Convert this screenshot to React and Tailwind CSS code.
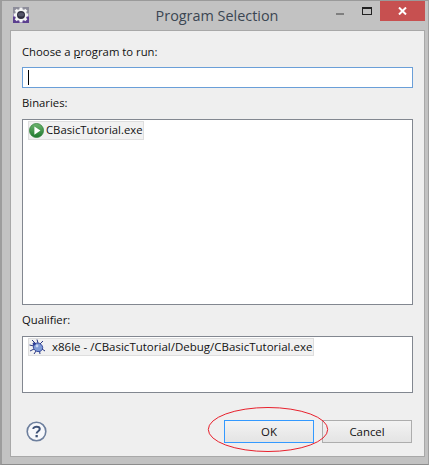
import React from "react";

function Gear() {
  const teeth = [0, 45, 90, 135, 180, 225, 270, 315];
  return (
    <svg width="16" height="16" viewBox="0 0 16 16" className="block">
      <rect x="0" y="0" width="16" height="16" fill="#5b3f8f" />
      <rect x="0" y="0" width="16" height="7" fill="#8d8d9a" />
      {teeth.map((a) => (
        <rect key={a} x="6.5" y="0.5" width="3" height="3" fill="#f4f4f4" transform={`rotate(${a} 8 8)`} />
      ))}
      <circle cx="8" cy="8" r="5" fill="#2f2f3f" stroke="#f4f4f4" strokeWidth="2" />
      <ellipse cx="8" cy="7.5" rx="3" ry="2" fill="#55556a" />
    </svg>
  );
}

function Play() {
  return (
    <svg width="15" height="15" viewBox="0 0 16 16" className="block">
      <defs>
        <linearGradient id="pg" x1="0" y1="0" x2="0" y2="1">
          <stop offset="0" stopColor="#6fb56f" />
          <stop offset="1" stopColor="#1f7a2f" />
        </linearGradient>
      </defs>
      <circle cx="8" cy="8" r="7.5" fill="url(#pg)" stroke="#2f7f3a" strokeWidth="0.8" />
      <path d="M5.7 3.6 L12.2 8 L5.7 12.4 Z" fill="#ffffff" />
    </svg>
  );
}

function Bug() {
  return (
    <svg width="17" height="16" viewBox="0 0 17 16" className="block">
      <g stroke="#27357f" strokeWidth="1" fill="none">
        <path d="M3 1 L7 5" />
        <path d="M8 0.5 L9 4" />
        <path d="M0.5 6 L5 7" />
        <path d="M1 12 L5 10" />
        <path d="M5 15 L7 12" />
        <path d="M11 15 L10.5 12" />
        <path d="M16 12 L13 10" />
        <path d="M14 2 L11 5" />
      </g>
      <ellipse cx="9" cy="8.3" rx="4.8" ry="4.2" fill="#7f9bd6" stroke="#2d3f96" strokeWidth="0.8" transform="rotate(25 9 8.3)" />
      <circle cx="8" cy="7" r="1.4" fill="#c9d6f3" />
      <circle cx="5.2" cy="4.8" r="1.6" fill="#2d3f96" />
    </svg>
  );
}

function Help() {
  return (
    <svg width="21" height="21" viewBox="0 0 21 21" className="block">
      <circle cx="10.5" cy="10.5" r="9.3" fill="#f7f8fb" stroke="#6d7f9d" strokeWidth="1.6" />
      <path d="M7.3 8 C7.3 4.9 13.8 4.9 13.8 8.1 C13.8 10.2 10.6 10.3 10.6 12.6" fill="none" stroke="#3f5378" strokeWidth="2" />
      <rect x="9.5" y="14" width="2.3" height="2.3" fill="#3f5378" />
    </svg>
  );
}

export default function App() {
  return (
    <div
      className="relative w-[429px] h-[465px] bg-[#c2c2c2] border-t border-t-[#9a9a9a] border-l-2 border-l-[#9c9c9c] border-r border-r-[#a0a0a0] border-b border-b-[#8c8c8c] text-[11.3px] text-[#111111] overflow-hidden"
      style={{ fontFamily: '"Open Sans", "Noto Sans", sans-serif' }}
    >
      {/* Title bar */}
      <div className="relative h-[29px] flex items-center justify-center">
        <div className="absolute left-[11px] top-[6px]">
          <Gear />
        </div>
        <span className="text-[14.4px] text-[#3b4652] ml-[4px]">Program Selection</span>
        <div className="absolute right-[84px] top-[12px] w-[8px] h-[2px] bg-[#7f7f7f]" />
        <div className="absolute right-[56px] top-[6px] w-[10px] h-[8px] border border-[#222] border-t-2" />
        <div className="absolute right-[3px] top-0 w-[45px] h-[20px] bg-[#c75050] flex items-center justify-center">
          <svg width="9" height="8" viewBox="0 0 9 8">
            <path d="M1 0.5 L8 7.5 M8 0.5 L1 7.5" stroke="#fff" strokeWidth="2" />
          </svg>
        </div>
      </div>

      {/* Panel */}
      <div className="ml-[8px] mr-[3px] h-[427px] bg-[#efefef] border border-[#a8a8a8] pl-[11px] pr-[11px] flex flex-col">
        <div className="mt-[9px] h-[23px] leading-[23px]">
          Choose a <span className="underline">p</span>rogram to run:
        </div>
        <div className="mt-[4px] h-[21px] bg-white border border-[#6a9fd8] flex items-center pl-[5px] shrink-0">
          <div className="w-px h-[15px] bg-black" />
        </div>
        <div className="mt-[4px] h-[22px] leading-[22px]">Binaries:</div>
        <div className="mt-[5px] h-[186px] shrink-0 bg-white border border-[#828790] pt-[1px] pl-[5px]">
          <div className="inline-flex items-center h-[19px] bg-[#f1f1f1] border border-[#dedede] pr-px gap-[2px]">
            <Play />
            <span>CBasicTutorial.exe</span>
          </div>
        </div>
        <div className="mt-[2px] h-[25px] leading-[25px]">Qualifier:</div>
        <div className="mt-[4px] h-[57px] shrink-0 bg-white border border-[#828790] pt-[1px] pl-[5px]">
          <div className="inline-flex items-center h-[18px] bg-[#f1f1f1] border border-[#dedede] pr-px">
            <Bug />
            <span className="ml-[6px] text-[11.5px]">x86le - /CBasicTutorial/Debug/CBasicTutorial.exe</span>
          </div>
        </div>
        <div className="mt-[27px] flex items-center">
          <div className="ml-[4px]">
            <Help />
          </div>
          <div className="ml-auto flex gap-[8px] mr-[1px]">
            <button className="w-[90px] h-[23px] border border-[#3399ff] bg-gradient-to-b from-[#f3f3f3] to-[#e4e4e4] text-[11.4px] text-[#111111]">
              OK
            </button>
            <button className="w-[90px] h-[23px] border border-[#adadad] bg-gradient-to-b from-[#f3f3f3] to-[#e4e4e4] text-[11.4px] text-[#111111]">
              Cancel
            </button>
          </div>
        </div>
      </div>

      {/* Hand-drawn annotation over the dialog */}
      <svg className="absolute left-[203px] top-[404px]" width="126" height="50" viewBox="0 0 126 50">
        <ellipse cx="63" cy="24.5" rx="59.7" ry="22" fill="none" stroke="#e8202c" strokeWidth="1" />
      </svg>
    </div>
  );
}
